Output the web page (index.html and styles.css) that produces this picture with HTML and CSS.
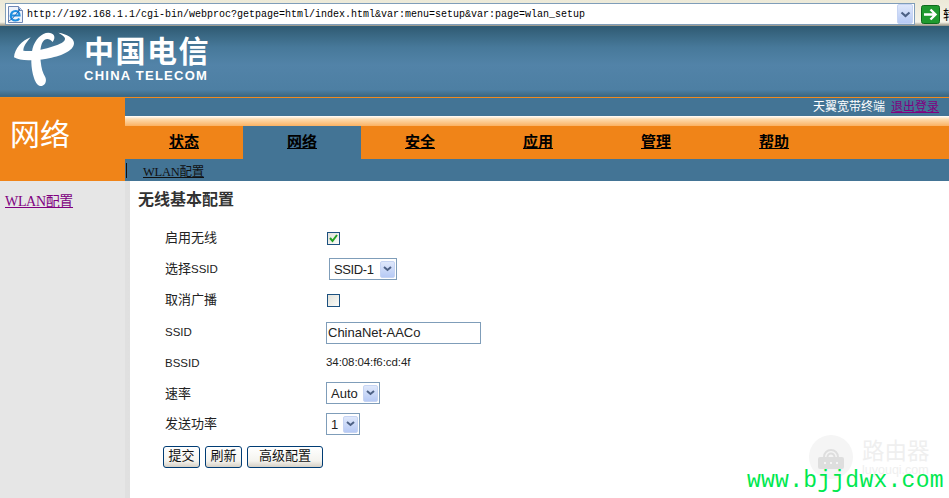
FILE: index.html
```html
<!DOCTYPE html>
<html lang="zh">
<head>
<meta charset="utf-8">
<title>无线基本配置</title>
<link rel="stylesheet" href="styles.css">
</head>
<body>
<div class="page">
  <div class="addr">
    <div class="url-box">
      <svg class="ie" width="17" height="17" viewBox="0 0 17 17">
        <path d="M1.500 .5h10l4 4v12h-14z" fill="#eef2fa" stroke="#6f87b5"/>
        <path d="M11.500 .5v4h4" fill="#cfdcf3" stroke="#6f87b5"/>
        <path d="M4 9.500h8.500C12.500 6.500 10.500 5 8.500 5 5.500 5 3.800 7.300 3.800 10c0 2.700 2 4.500 4.700 4.500 1.700 0 3-.7 3.800-2" fill="none" stroke="#1f8fe0" stroke-width="2.200"/>
        <path d="M1.500 15c2-.5 9-7 11.500-12.500" fill="none" stroke="#1a5fb0" stroke-width="1"/>
      </svg>
      <span class="url">http://192.168.1.1/cgi-bin/webproc?getpage=html/index.html&amp;var:menu=setup&amp;var:page=wlan_setup</span>
      <span class="arrow-btn arrow-url"><svg width="11" height="7" viewBox="0 0 11 7"><path d="M1.500 1.500l4 3.500 4-3.500" fill="none" stroke="#4d6185" stroke-width="2.200"/></svg></span>
    </div>
    <svg class="go" width="19" height="19" viewBox="0 0 19 19">
      <rect x="0.500" y="0.500" width="18" height="18" rx="2" fill="#1f9a2f" stroke="#0e6b1c"/>
      <path d="M3 9.500h11M9.500 4.500l5 5-5 5" fill="none" stroke="#fff" stroke-width="2.400"/>
    </svg>
    <span class="go-label">转到</span>
  </div>

  <header class="banner">
    <svg class="mark" width="70" height="62" viewBox="0 0 210 186">
      <path d="M12 88C14 62 35 38 62 28 50 42 40 55 40 68 60 72 100 66 130 55 150 48 165 42 165 32 165 26 155 20 145 14 170 18 192 30 192 45 192 70 150 85 110 92 70 98 30 100 12 88Z" fill="#fff"/>
      <path d="M68 60C75 35 95 14 115 14 130 14 140 25 128 42 118 30 105 30 98 42 90 55 90 80 92 100 94 120 98 135 106 148 110 158 108 170 96 174 86 176 78 168 72 150 62 120 62 85 68 60Z" fill="#fff"/>
    </svg>
    <div class="brand">
      <span class="brand-cn">中国电信</span>
      <span class="brand-en">CHINA TELECOM</span>
    </div>
  </header>

  <div class="main">
    <aside class="side">
      <div class="side-title">网络</div>
      <div class="side-nav"><a class="side-link" href="#">WLAN配置</a></div>
    </aside>
    <div class="right">
      <div class="status"><span class="status-text">天翼宽带终端</span><a class="logout" href="#">退出登录</a></div>
      <div class="strip"></div>
      <nav class="tabs">
        <a class="tab" href="#">状态</a>
        <a class="tab tab-on" href="#">网络</a>
        <a class="tab" href="#">安全</a>
        <a class="tab" href="#">应用</a>
        <a class="tab" href="#">管理</a>
        <a class="tab" href="#">帮助</a>
      </nav>
      <div class="sub"><span class="sub-bar"></span><a class="sub-link" href="#">WLAN配置</a></div>
      <main class="content">
        <h1 class="title">无线基本配置</h1>
        <div class="form">
          <div class="row"><span class="label">启用无线</span><span class="check"><svg width="11" height="11" viewBox="0 0 11 11"><path d="M2 5l2.500 3L9 2" fill="none" stroke="#21a121" stroke-width="2"/></svg></span></div>
          <div class="row"><span class="label">选择<span class="latin">SSID</span></span><span class="select select-ssid">SSID-1<span class="arrow-btn"><svg width="9" height="6" viewBox="0 0 9 6"><path d="M1 1l3.500 3L8 1" fill="none" stroke="#4d6185" stroke-width="2"/></svg></span></span></div>
          <div class="row"><span class="label">取消广播</span><span class="check"></span></div>
          <div class="row"><span class="label label-latin">SSID</span><span class="input">ChinaNet-AACo</span></div>
          <div class="row"><span class="label label-latin">BSSID</span><span class="mac">34:08:04:f6:cd:4f</span></div>
          <div class="row"><span class="label">速率</span><span class="select select-auto">Auto<span class="arrow-btn"><svg width="9" height="6" viewBox="0 0 9 6"><path d="M1 1l3.500 3L8 1" fill="none" stroke="#4d6185" stroke-width="2"/></svg></span></span></div>
          <div class="row"><span class="label label-last">发送功率</span><span class="select select-one">1<span class="arrow-btn"><svg width="9" height="6" viewBox="0 0 9 6"><path d="M1 1l3.500 3L8 1" fill="none" stroke="#4d6185" stroke-width="2"/></svg></span></span></div>
        </div>
        <div class="buttons">
          <button class="btn btn-s" type="button">提交</button>
          <button class="btn btn-s" type="button">刷新</button>
          <button class="btn btn-l" type="button">高级配置</button>
        </div>
      </main>
    </div>
  </div>

  <div class="wm">
    <div class="wm-badge"><svg width="44" height="44" viewBox="0 0 44 44"><circle cx="22" cy="22" r="22" fill="#f5f5f5"/><rect x="9" y="22" width="26" height="12" rx="2" fill="#dedede"/><path d="M15 22a7 7 0 0 1 14 0M18.500 22a3.500 3.500 0 0 1 7 0" fill="none" stroke="#dedede" stroke-width="2"/><path d="M15 28h2M21 28h2M27 28h2" stroke="#f5f5f5" stroke-width="2"/></svg></div>
    <div class="wm-text"><span class="wm-cn">路由器</span><span class="wm-en">luyouqi.com</span></div>
  </div>
  <div class="stamp">www.bjjdwx.com</div>
</div>
</body>
</html>
```
FILE: styles.css
```css
* { box-sizing: border-box; }
html, body { margin: 0; padding: 0; }
body { background: #fff; font-family: "Liberation Serif", "Noto Sans CJK SC", serif; font-size: 12px; color: #111; }
a { color: inherit; }
.page { position: relative; width: 949px; height: 498px; overflow: hidden; display: flex; flex-direction: column; }

.addr { height: 26px; flex: none; display: flex; align-items: flex-start; padding: 3px 0 0 5px; background: linear-gradient(#ece9d8 0, #f5f3e8 85%, #aca899 96%, #8f8f88 100%); overflow: hidden; }
.url-box { width: 910px; height: 22px; flex: none; background: #fff; border: 1px solid #7f9db9; display: flex; align-items: center; padding: 0 1px 0 1px; }
.ie { flex: none; margin-right: 3px; }
.url { flex: 1; font-family: "Liberation Mono", "DejaVu Sans Mono", monospace; font-size: 10px; color: #000; white-space: nowrap; }
.arrow-btn { display: inline-flex; align-items: center; justify-content: center; width: 15px; height: 17px; background: linear-gradient(#dfe8fb, #b7caf5); border-radius: 2px; border: 1px solid #c6d4f3; flex: none; }
.arrow-url { width: 16px; height: 20px; }
.go { margin-left: 6px; margin-top: 2px; flex: none; }
.go-label { margin-left: 3px; font-family: "Noto Sans CJK SC", sans-serif; font-size: 13px; line-height: 18px; color: #000; white-space: nowrap; margin-top: 2px; }

.banner { height: 72px; flex: none; display: flex; align-items: flex-start; padding: 2px 0 0 10px; background: linear-gradient(#2f5a72 0, #47799a 30%, #5283a8 55%, #4d7fa3 90%, #3d6a86 98%); border-bottom: 1px solid #f08a1e; }
.mark { flex: none; }
.brand { display: flex; flex-direction: column; margin-left: 4px; margin-top: 5px; color: #fff; }
.brand-cn { font-family: "Noto Sans CJK SC", sans-serif; font-weight: 700; font-size: 30px; line-height: 32px; letter-spacing: 1.500px; white-space: nowrap; }
.brand-en { font-family: "Liberation Sans", sans-serif; font-weight: 700; font-size: 13px; line-height: 14px; letter-spacing: 1.250px; white-space: nowrap; margin-top: 4px; }

.main { flex: 1; display: grid; grid-template-columns: 125px 1fr; min-height: 0; }
.side { display: flex; flex-direction: column; }
.side-title { height: 83px; flex: none; background: #f08418; color: #fff; font-family: "Noto Sans CJK SC", sans-serif; font-size: 30px; line-height: 38px; padding: 15px 0 0 10px; }
.side-nav { flex: 1; background: #e6e6e6; padding: 13px 0 0 5px; }
.side-link { font-size: 14px; letter-spacing: -0.330px; color: #800080; line-height: 16px; }

.right { display: flex; flex-direction: column; min-width: 0; }
.status { height: 18px; flex: none; background: #437495; display: flex; justify-content: flex-end; align-items: flex-start; padding-right: 10px; font-family: "Noto Sans CJK SC", sans-serif; font-size: 12px; line-height: 16px; }
.status-text { color: #fff; margin-right: 6px; }
.logout { color: #800080; }
.strip { height: 10px; flex: none; background: linear-gradient(#fff 0, #fddcb0 30%, #fbb263 100%); }
.tabs { height: 33px; flex: none; background: #f08418; display: flex; }
.tab { width: 118px; text-align: center; font-family: "Noto Sans CJK SC", sans-serif; font-weight: 700; font-size: 15px; line-height: 30px; color: #000; }
.tab-on { background: #437495; }
.sub { height: 22px; flex: none; background: #437495; display: flex; align-items: center; padding-left: 1px; font-size: 12.500px; }
.sub-bar { width: 1px; height: 15px; background: #111; margin-right: 16px; }
.sub-link { color: #111; letter-spacing: -0.250px; }
.content { flex: 1; padding: 6px 0 0 8px; background: #fff; border-left: 5px solid #c9c9c9; border-image: linear-gradient(90deg, #e0e0e0, #bcbcbc 40%, #d8d8d8 70%, #f6f6f6) 1; }
.title { margin: 0; font-family: "Noto Sans CJK SC", sans-serif; font-weight: 700; font-size: 16px; line-height: 22px; color: #333; }
.form { margin-top: 14px; padding-left: 27px; display: flex; flex-direction: column; }
.row { height: 31.200px; display: flex; align-items: center; }
.label { width: 161px; flex: none; font-family: "Liberation Sans", "Noto Sans CJK SC", sans-serif; font-size: 13px; color: #222; margin-top: -5px; }
.label-latin { font-size: 11.500px; margin-top: -1px; }
.label-last { margin-top: -7px; }
.latin { font-size: 11.500px; }
.check { width: 13px; height: 13px; margin-left: 1px; border: 1px solid #1c5180; background: linear-gradient(135deg, #e2e2da, #fbfbf8); display: inline-flex; align-items: center; justify-content: center; }
.select { height: 22px; display: inline-flex; align-items: center; justify-content: space-between; border: 1px solid #7f9db9; padding: 0 1px 0 4px; background: #fff; font-family: "Liberation Sans", sans-serif; font-size: 13px; color: #222; margin-top: -1px; }
.select-ssid { width: 68px; margin-left: 3px; letter-spacing: -0.400px; }
.select-auto { width: 54px; margin-top: -3px; }
.select-one { width: 34px; margin-top: -3px; }
.input { width: 155px; height: 22px; margin-top: 1px; display: flex; align-items: center; border: 1px solid #7f9db9; padding: 0 1px; font-family: "Liberation Sans", sans-serif; font-size: 13px; color: #222; }
.mac { font-family: "Liberation Sans", sans-serif; font-size: 11.500px; letter-spacing: -0.080px; color: #222; margin-top: -2px; }
.buttons { margin-top: 5px; padding-left: 25px; display: flex; gap: 5px; }
.btn { height: 22px; padding: 0 0 5px; border: 1px solid #003c74; border-radius: 3px; background: linear-gradient(#fff, #f4f3ee 70%, #d6d0c5); font-family: "Noto Sans CJK SC", sans-serif; font-size: 13px; line-height: 16px; color: #111; display: block; }
.btn-s { width: 37px; }
.btn-l { width: 76px; }

.wm { position: absolute; left: 809px; top: 435px; display: flex; align-items: flex-start; gap: 9px; }
.wm-text { display: flex; flex-direction: column; color: #efefef; font-family: "Noto Sans CJK SC", sans-serif; }
.wm-cn { font-size: 22.500px; line-height: 28px; }
.wm-en { font-family: "Liberation Sans", sans-serif; font-size: 12.500px; line-height: 14px; }
.stamp { position: absolute; left: 747px; top: 468px; font-family: "Liberation Mono", monospace; font-size: 23px; line-height: 26px; letter-spacing: 0.250px; color: #00e84f; white-space: nowrap; }
```
